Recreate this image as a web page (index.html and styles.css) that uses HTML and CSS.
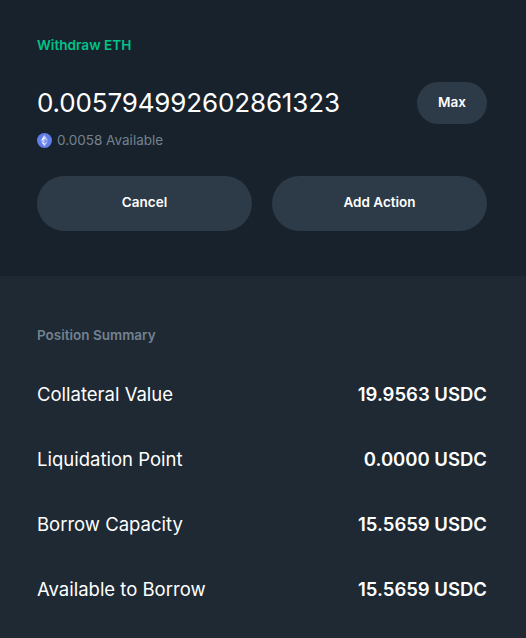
FILE: index.html
```html
<!DOCTYPE html>
<html lang="en">
<head>
  <meta charset="UTF-8">
  <title>Withdraw ETH</title>
  <link rel="stylesheet" href="styles.css">
</head>
<body>
  <section class="action-panel">
    <h2 class="action-title">Withdraw ETH</h2>
    <div class="amount-row">
      <span class="amount">0.005794992602861323</span>
      <button class="btn btn-max">Max</button>
    </div>
    <div class="available">
      <svg class="eth-icon" width="15" height="15" viewBox="0 0 32 32">
        <circle cx="16" cy="16" r="16" fill="#627eea"/>
        <path d="M16 4v8.9l7.5 3.3z" fill="#fff" fill-opacity=".6"/>
        <path d="M16 4l-7.5 12.2 7.5-3.3z" fill="#fff"/>
        <path d="M16 22v6l7.5-10.4z" fill="#fff" fill-opacity=".6"/>
        <path d="M16 28v-6l-7.5-4.4z" fill="#fff"/>
        <path d="M16 20.6l7.5-4.4-7.5-3.3z" fill="#fff" fill-opacity=".2"/>
        <path d="M8.5 16.2l7.5 4.4v-7.7z" fill="#fff" fill-opacity=".6"/>
      </svg>
      <span>0.0058 Available</span>
    </div>
    <div class="action-buttons">
      <button class="btn btn-wide">Cancel</button>
      <button class="btn btn-wide">Add Action</button>
    </div>
  </section>
  <section class="summary-panel">
    <h3 class="summary-title">Position Summary</h3>
    <div class="summary-row"><span>Collateral Value</span><strong>19.9563 USDC</strong></div>
    <div class="summary-row"><span>Liquidation Point</span><strong>0.0000 USDC</strong></div>
    <div class="summary-row"><span>Borrow Capacity</span><strong>15.5659 USDC</strong></div>
    <div class="summary-row"><span>Available to Borrow</span><strong>15.5659 USDC</strong></div>
  </section>
</body>
</html>
```
FILE: styles.css
```css
* {
  box-sizing: border-box;
}
html, body {
  height: 100%;
}
body {
  margin: 0;
  overflow: hidden;
  background-color: #1e2933;
  color: #fff;
  font-family: Inter, "Liberation Sans", Arial, sans-serif;
  display: flex;
  flex-direction: column;
}
.action-panel {
  height: 276px;
  padding: 37px 39px 0 37px;
  background-color: #18222c;
}
.action-title {
  margin: 0;
  height: 16px;
  color: #00c389;
  font-size: 13.6px;
  font-weight: 600;
  line-height: 16px;
}
.amount-row {
  display: flex;
  align-items: center;
  justify-content: space-between;
  margin-top: 29px;
}
.amount {
  font-size: 26px;
  line-height: 42px;
  letter-spacing: -0.15px;
}
.btn {
  border: 0;
  padding: 0 0 2px;
  background-color: #2d3a47;
  color: #fff;
  font-family: inherit;
  font-size: 13.5px;
  font-weight: 600;
}
.btn-max {
  width: 70px;
  height: 42px;
  border-radius: 21px;
}
.available {
  display: flex;
  align-items: center;
  gap: 5px;
  margin-top: 8px;
  color: #73828f;
  font-size: 13.5px;
  line-height: 16px;
}
.action-buttons {
  display: flex;
  gap: 20px;
  margin-top: 28px;
}
.btn-wide {
  flex: 1;
  height: 55px;
  padding-bottom: 4px;
  border-radius: 28px;
}
.summary-panel {
  flex: 1;
  padding: 51px 39px 0 37px;
}
.summary-title {
  margin: 0 0 18px;
  color: #73828f;
  font-size: 13.5px;
  font-weight: 600;
  line-height: 16px;
}
.summary-row {
  display: flex;
  align-items: center;
  justify-content: space-between;
  height: 65px;
  font-size: 18.5px;
}
.summary-row strong {
  font-weight: 600;
}
```
